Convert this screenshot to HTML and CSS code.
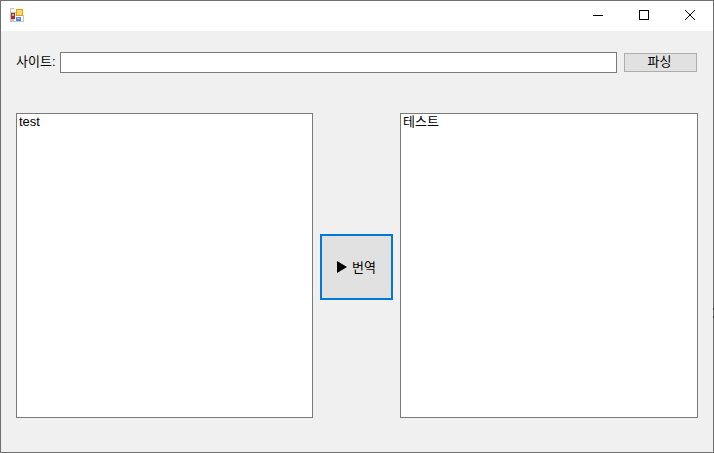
FILE: index.html
```html
<!DOCTYPE html>
<html lang="ko">
<head>
  <meta charset="UTF-8" />
  <title>번역</title>
  <link rel="stylesheet" href="styles.css">
</head>
<body>
  <div class="window">
    <div class="titlebar">
      <svg class="app-icon" width="14" height="14" viewBox="0 0 14 14">
        <rect x="0" y="0" width="14" height="14" fill="#fff"/>
        <path d="M0 0h4v1H1v12h12v1H0z" fill="#c4c4c4"/>
        <path d="M13 7h1v7h-1zM1 4h5v1H1zM1 11h3v2H1z" fill="#c4c4c4"/>
        <rect x="1" y="5" width="4" height="6" fill="#b02a20"/>
        <rect x="2" y="6" width="2" height="2" fill="#f0a0a0"/>
        <rect x="6" y="1" width="7" height="7" fill="#e0a010"/>
        <rect x="7" y="2" width="5" height="5" fill="#fbd96b"/>
        <rect x="6" y="9" width="5" height="4" fill="#4f88dc"/>
        <rect x="7" y="10" width="3" height="1" fill="#a9c8f2"/>
      </svg>
      <div class="controls">
        <svg class="ctl" width="46" height="30" viewBox="0 0 46 30"><path d="M18 14.5h10" stroke="#000" fill="none"/></svg>
        <svg class="ctl" width="46" height="30" viewBox="0 0 46 30"><rect x="18.5" y="9.5" width="9" height="9" stroke="#000" fill="none"/></svg>
        <svg class="ctl" width="46" height="30" viewBox="0 0 46 30"><path d="M18 9l10 10M28 9L18 19" stroke="#000" fill="none"/></svg>
      </div>
    </div>
    <div class="content">
      <div class="url-row">
        <label class="url-label" for="site">사이트:</label>
        <input class="url-input" id="site" type="text" />
        <button class="parse-btn" type="button">파싱</button>
      </div>
      <div class="panels">
        <div class="text-box left">test</div>
        <button class="translate-btn" type="button"><span class="arrow"></span>번역</button>
        <div class="text-box right">테스트</div>
      </div>
    </div>
    <span class="edge-mark top"></span>
    <span class="edge-mark bottom"></span>
  </div>
</body>
</html>
```

FILE: styles.css
```css
* {
  box-sizing: border-box;
}
body {
  margin: 0;
  background: #f0f0f0;
  font-family: "Liberation Sans", "Noto Sans CJK KR", sans-serif;
  font-size: 12px;
  color: #000;
}
.window {
  position: relative;
  width: 714px;
  height: 453px;
  border: 1px solid #6f6f6f;
  background: #f0f0f0;
  display: flex;
  flex-direction: column;
}
.titlebar {
  height: 30px;
  background: #fff;
  display: flex;
  align-items: flex-start;
  justify-content: space-between;
  padding-left: 9px;
}
.app-icon {
  margin-top: 7px;
}
.controls {
  display: flex;
}
.ctl {
  display: block;
}
.content {
  padding: 21px 15px 0;
}
.url-row {
  display: flex;
  align-items: center;
  height: 21px;
}
.url-label {
  width: 44px;
  font-size: 13px;
  white-space: nowrap;
  margin-top: -5px;
}
.url-input {
  width: 557px;
  height: 21px;
  border: 1px solid #7a7a7a;
  background: #fff;
  padding: 0;
  outline: none;
}
.parse-btn {
  width: 73px;
  height: 19px;
  margin-left: 7px;
  border: 1px solid #adadad;
  background: #e1e1e1;
  font: inherit;
  font-size: 13px;
  line-height: 15px;
  padding: 0 2px 3px 0;
}
.panels {
  display: flex;
  align-items: flex-start;
  margin-top: 40px;
}
.text-box {
  height: 305px;
  border: 1px solid #7a7a7a;
  background: #fff;
  padding: 1px 2px 0;
  font-size: 13px;
  line-height: 14px;
}
.text-box.left {
  width: 297px;
}
.text-box.right {
  width: 298px;
}
.translate-btn {
  width: 73px;
  height: 66px;
  margin: 121px 7px 0;
  border: 2px solid #0078d7;
  background: #e1e1e1;
  font: inherit;
  font-size: 13px;
  padding: 0 0 2px;
  display: flex;
  align-items: center;
  justify-content: center;
}
.arrow {
  width: 0;
  height: 0;
  border-left: 10px solid #000;
  border-top: 6px solid transparent;
  border-bottom: 6px solid transparent;
  margin: 2px 5px 0 0;
}
.edge-mark {
  position: absolute;
  right: -1px;
  width: 1px;
  height: 2px;
  background: #222;
}
.edge-mark.top {
  top: 307px;
}
.edge-mark.bottom {
  top: 315px;
}
```
